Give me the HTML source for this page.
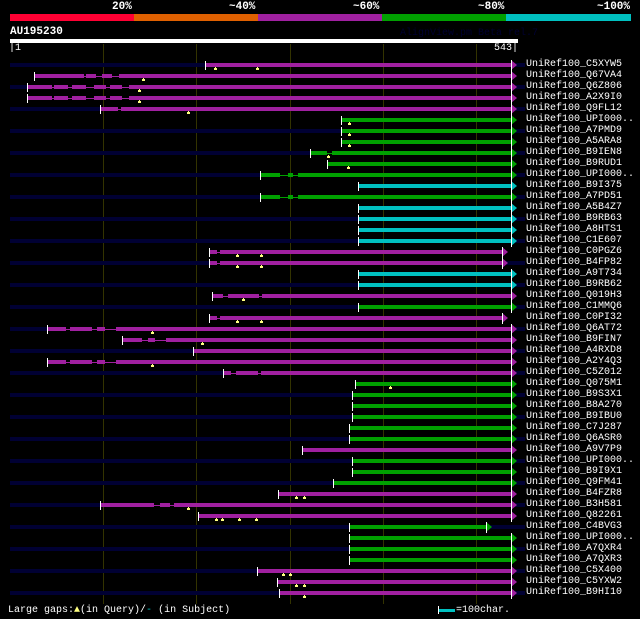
<!DOCTYPE html>
<html><head><meta charset="utf-8"><style>
html,body{margin:0;padding:0;background:#000;width:640px;height:619px;overflow:hidden}
body{position:relative;font-family:"Liberation Mono",monospace;color:#fff}
.t{position:absolute;font-size:10px;line-height:11px;white-space:pre}
.h{position:absolute;font-weight:bold;font-size:11px;line-height:12px}
</style></head><body>
<svg id="s" width="640" height="619" style="position:absolute;left:0;top:0">
<rect x="10" y="14" width="124" height="7" fill="#ff0033"/>
<rect x="134" y="14" width="124" height="7" fill="#e06000"/>
<rect x="258" y="14" width="124" height="7" fill="#a020a0"/>
<rect x="382" y="14" width="124" height="7" fill="#00a000"/>
<rect x="506" y="14" width="125" height="7" fill="#00c0c0"/>
<rect x="10" y="39" width="508" height="4" fill="#fff"/>
<g id="g"></g>
<rect x="439" y="609" width="16" height="3" fill="#00c0c0"/>
<rect x="438" y="606" width="1" height="8" fill="#fff"/>
</svg>
<div class="h" style="left:112px;top:1px">20%</div>
<div class="h" style="left:229px;top:1px">~40%</div>
<div class="h" style="left:353px;top:1px">~60%</div>
<div class="h" style="left:478px;top:1px">~80%</div>
<div class="h" style="left:597px;top:1px">~100%</div>
<div class="h" style="left:10px;top:26px">AU195230</div>
<div class="t" style="left:400px;top:28px;color:#000030">AlignView.pm Beta rel.7</div>
<div class="t" style="left:9px;top:43px">|1</div>
<div class="t" style="left:494px;top:43px">543|</div>
<div class="t" style="left:526px;top:59px">UniRef100_C5XYW5
UniRef100_Q67VA4
UniRef100_Q6Z806
UniRef100_A2X9I0
UniRef100_Q9FL12
UniRef100_UPI000..
UniRef100_A7PMD9
UniRef100_A5ARA8
UniRef100_B9IEN8
UniRef100_B9RUD1
UniRef100_UPI000..
UniRef100_B9I375
UniRef100_A7PD51
UniRef100_A5B4Z7
UniRef100_B9RB63
UniRef100_A8HTS1
UniRef100_C1E607
UniRef100_C0PGZ6
UniRef100_B4FP82
UniRef100_A9T734
UniRef100_B9RB62
UniRef100_Q019H3
UniRef100_C1MMQ6
UniRef100_C0PI32
UniRef100_Q6AT72
UniRef100_B9FIN7
UniRef100_A4RXD8
UniRef100_A2Y4Q3
UniRef100_C5Z012
UniRef100_Q075M1
UniRef100_B9S3X1
UniRef100_B8A270
UniRef100_B9IBU0
UniRef100_C7J287
UniRef100_Q6ASR0
UniRef100_A9V7P9
UniRef100_UPI000..
UniRef100_B9I9X1
UniRef100_Q9FM41
UniRef100_B4FZR8
UniRef100_B3H581
UniRef100_Q82261
UniRef100_C4BVG3
UniRef100_UPI000..
UniRef100_A7QXR4
UniRef100_A7QXR3
UniRef100_C5X400
UniRef100_C5YXW2
UniRef100_B9HI10</div>
<div class="t" style="left:8px;top:605px">Large gaps:<span style="color:#ffff80">▲</span>(in Query)/<span style="color:#00c0c0">-</span> (in Subject)</div>
<div class="t" style="left:456px;top:605px">=100char.</div>
<script>
var P='#a020a0',G='#00a000',C='#00c0c0';
var D=[
[205,511,P,[215,257],[]],
[34,511,P,[143],[[84,86],[96,102],[112,119]]],
[27,511,P,[139],[[52,54],[68,72],[86,94],[106,110],[122,129]]],
[27,511,P,[139],[[52,54],[68,72],[86,94],[106,110],[122,129]]],
[100,511,P,[188],[[118,121]]],
[341,511,G,[349],[]],[341,511,G,[349],[]],[341,511,G,[349],[]],
[310,511,G,[328],[[327,332]]],
[327,511,G,[348],[]],
[260,511,G,[],[[280,288],[293,298]]],
[358,511,C,[],[]],
[260,511,G,[],[[280,288],[293,298]]],
[358,511,C,[],[]],[358,511,C,[],[]],[358,511,C,[],[]],[358,511,C,[],[]],
[209,502,P,[237,261],[[217,220]]],
[209,502,P,[237,261],[[217,220]]],
[358,511,C,[],[]],[358,511,C,[],[]],
[212,511,P,[243],[[223,228],[259,262]]],
[358,511,G,[],[]],
[209,502,P,[237,261],[[217,220]]],
[47,511,P,[152],[[66,70],[92,97],[105,116]]],
[122,511,P,[202],[[142,148],[155,166]]],
[193,511,P,[],[]],
[47,511,P,[152],[[66,70],[92,97],[105,116]]],
[223,511,P,[],[[231,236],[258,261]]],
[355,511,G,[390],[]],
[352,511,G,[],[]],[352,511,G,[],[]],[352,511,G,[],[]],
[349,511,G,[],[]],[349,511,G,[],[]],
[302,511,P,[],[]],
[352,511,G,[],[]],[352,511,G,[],[]],
[333,511,G,[],[]],
[278,511,P,[296,304],[]],
[100,511,P,[188],[[154,160],[170,174]]],
[198,511,P,[216,222,239,256],[]],
[349,486,G,[],[]],
[349,511,G,[],[]],[349,511,G,[],[]],[349,511,G,[],[]],
[257,511,P,[283,290],[]],
[277,511,P,[296,304],[]],
[279,511,P,[304],[]]
];
var h='';
[103,196,290,383,476].forEach(function(x){h+='<rect x="'+x+'" y="44" width="1" height="560" fill="#333300"/>';});
D.forEach(function(r,i){
 var y=65+11*i;
 if(i%2==0)h+='<rect x="10" y="'+(y-2)+'" width="515" height="4" fill="#000033"/>';
 h+='<rect x="'+r[0]+'" y="'+(y-2)+'" width="'+(r[1]-r[0])+'" height="4" fill="'+r[2]+'"/>';
 r[4].forEach(function(g){h+='<rect x="'+g[0]+'" y="'+(y-2)+'" width="'+(g[1]-g[0])+'" height="4" fill="#000"/><rect x="'+g[0]+'" y="'+y+'" width="'+(g[1]-g[0])+'" height="1" fill="'+r[2]+'"/>';});
 h+='<rect x="'+r[0]+'" y="'+(y-4)+'" width="1" height="9" fill="#fff"/>';
 h+='<polygon points="'+r[1]+','+(y-5)+' '+(r[1]+6)+','+y+' '+r[1]+','+(y+5)+'" fill="'+r[2]+'"/>';
 h+='<rect x="'+r[1]+'" y="'+(y-5)+'" width="1" height="11" fill="#fff"/>';
 r[3].forEach(function(t){h+='<rect x="'+t+'" y="'+(y+2)+'" width="1" height="1" fill="#ffff80"/><rect x="'+(t-1)+'" y="'+(y+3)+'" width="3" height="2" fill="#ffff80"/>';});
});
document.getElementById('g').innerHTML=h;
</script>
</body></html>
